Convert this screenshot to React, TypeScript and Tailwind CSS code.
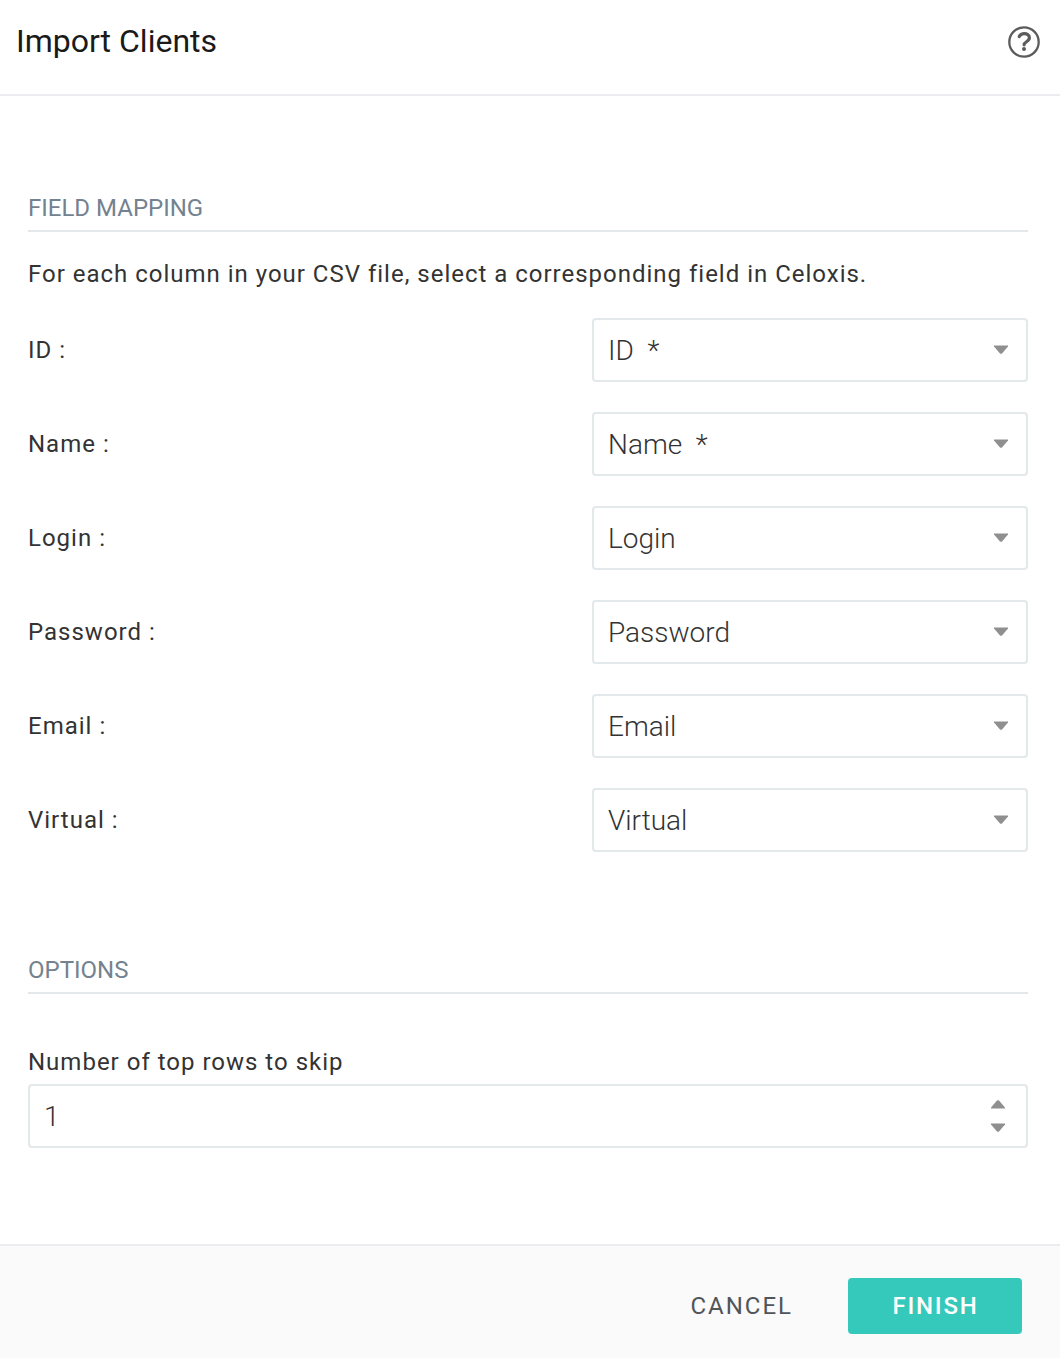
import React, { useState } from 'react';

interface FieldMapping {
  column: string;
  value: string;
}

const fieldMappings: FieldMapping[] = [
  { column: 'ID', value: 'ID\u00a0 *' },
  { column: 'Name', value: 'Name\u00a0 *' },
  { column: 'Login', value: 'Login' },
  { column: 'Password', value: 'Password' },
  { column: 'Email', value: 'Email' },
  { column: 'Virtual', value: 'Virtual' },
];

function SectionTitle({ children }: { children: React.ReactNode }) {
  return (
    <h2 className="h-8 border-b-2 border-[#e3e8eb] text-2xl leading-4 text-[#74828f]">
      {children}
    </h2>
  );
}

function Caret({ className = '' }: { className?: string }) {
  return (
    <svg viewBox="0 0 14 9" className={`block h-[9px] w-3.5 ${className}`} fill="#8f8f8f">
      <path d="M0 .4h14v1.2L8 8.4Q7 9.3 6 8.4L0 1.6z" />
    </svg>
  );
}

export default function App() {
  const [skipRows, setSkipRows] = useState(1);

  return (
    <div className="flex h-[1358px] w-[1060px] flex-col bg-white font-['Roboto',sans-serif] text-[#333333]">
      {/* Header */}
      <header className="flex h-24 justify-between border-b-2 border-[#ebebf0] pl-4 pr-5">
        <h1 className="pt-[21px] text-[32px] leading-10 text-[#1a1a1a]">Import Clients</h1>
        <button aria-label="Help" className="mt-[26px] h-8 w-8">
          <svg viewBox="0 0 32 32" className="h-8 w-8" fill="none" stroke="#5c5c5c">
            <circle cx="16" cy="16" r="14.7" strokeWidth="2.3" />
            <path d="M11.2 10.6c1.2-2.2 3.1-2.9 5-2.9 3 0 5.2 1.6 5.2 4.1 0 4-5.3 3.8-5.3 7" strokeWidth="3.2" strokeLinecap="round" />
            <circle cx="16" cy="22.9" r="2" fill="#5c5c5c" stroke="none" />
          </svg>
        </button>
      </header>

      {/* Body */}
      <main className="flex-1 px-7 pr-8 pt-[104px]">
        <SectionTitle>FIELD MAPPING</SectionTitle>
        <p className="mt-[26px] text-2xl leading-8 tracking-[0.99px]">
          For each column in your CSV file, select a corresponding field in Celoxis.
        </p>

        <div className="mt-7 flex flex-col gap-[30px]">
          {fieldMappings.map(field => (
            <div key={field.column} className="flex h-16 items-center justify-between">
              <span className="text-2xl tracking-[1px]">{field.column} :</span>
              <button className="flex h-16 w-[436px] items-center justify-between rounded-[4px] border-2 border-[#e3e8eb] pl-3.5 pr-[18px] text-[28px] font-light">
                <span className="pt-0.5">{field.value}</span>
                <Caret className="mb-px" />
              </button>
            </div>
          ))}
        </div>

        <div className="mt-[110px]">
          <SectionTitle>OPTIONS</SectionTitle>
        </div>
        <label className="mt-[52px] block text-2xl leading-8 tracking-[1px]">Number of top rows to skip</label>
        <div className="mt-1.5 flex h-16 items-center justify-between rounded-[4px] border-2 border-[#e3e8eb] pl-3.5 pr-[21px] text-[28px] font-light">
          <span className="pt-0.5">{skipRows}</span>
          <div className="flex flex-col gap-3.5">
            <button aria-label="Increase" onClick={() => setSkipRows(skipRows + 1)}>
              <Caret className="rotate-180" />
            </button>
            <button aria-label="Decrease" onClick={() => setSkipRows(Math.max(0, skipRows - 1))}>
              <Caret />
            </button>
          </div>
        </div>
      </main>

      {/* Footer */}
      <footer className="flex h-[114px] items-start justify-end border-t-2 border-[#ebebf0] bg-[#fafafa] pr-[38px] pt-8">
        <button className="mr-[55px] h-14 text-2xl tracking-[2px] text-[#50555a]">CANCEL</button>
        <button className="h-14 w-[174px] rounded-[4px] bg-[#34c9bb] pl-px text-2xl font-medium tracking-[1.8px] text-white">FINISH</button>
      </footer>
    </div>
  );
}
